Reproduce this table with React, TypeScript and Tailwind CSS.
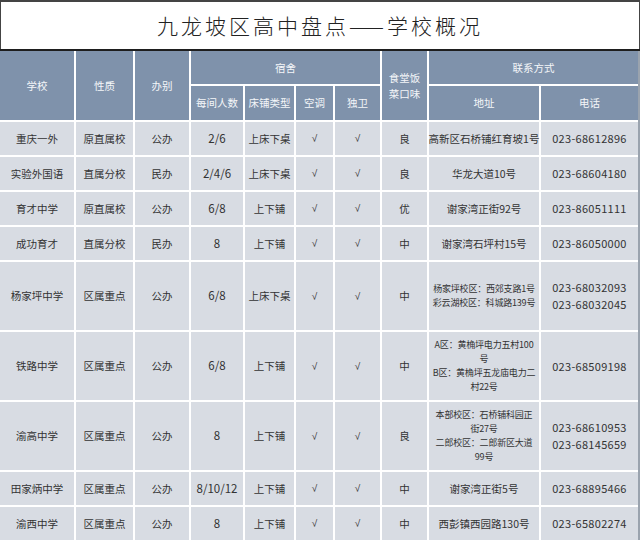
import React from "react";

const cjk = "font-['Noto_Sans_CJK_SC','Noto_Sans',sans-serif]";

type Row = {
  name: string;
  kind: string;
  type: string;
  people: string;
  bed: string;
  ac: string;
  bath: string;
  food: string;
  addr: string[];
  phone: string[];
};

const rows: Row[] = [
  { name: "重庆一外", kind: "原直属校", type: "公办", people: "2/6", bed: "上床下桌", ac: "√", bath: "√", food: "良", addr: ["高新区石桥铺红育坡1号"], phone: ["023-68612896"] },
  { name: "实验外国语", kind: "直属分校", type: "民办", people: "2/4/6", bed: "上床下桌", ac: "√", bath: "√", food: "良", addr: ["华龙大道10号"], phone: ["023-68604180"] },
  { name: "育才中学", kind: "原直属校", type: "公办", people: "6/8", bed: "上下铺", ac: "√", bath: "√", food: "优", addr: ["谢家湾正街92号"], phone: ["023-86051111"] },
  { name: "成功育才", kind: "直属分校", type: "民办", people: "8", bed: "上下铺", ac: "√", bath: "√", food: "中", addr: ["谢家湾石坪村15号"], phone: ["023-86050000"] },
  { name: "杨家坪中学", kind: "区属重点", type: "公办", people: "6/8", bed: "上床下桌", ac: "√", bath: "√", food: "中", addr: ["杨家坪校区：西郊支路1号", "彩云湖校区：科城路139号"], phone: ["023-68032093", "023-68032045"] },
  { name: "铁路中学", kind: "区属重点", type: "公办", people: "6/8", bed: "上下铺", ac: "√", bath: "√", food: "中", addr: ["A区：黄桷坪电力五村100", "号", "B区：黄桷坪五龙庙电力二", "村22号"], phone: ["023-68509198"] },
  { name: "渝高中学", kind: "区属重点", type: "公办", people: "8", bed: "上下铺", ac: "√", bath: "√", food: "良", addr: ["本部校区：石桥铺科园正", "街27号", "二郎校区：二郎新区大道", "99号"], phone: ["023-68610953", "023-68145659"] },
  { name: "田家炳中学", kind: "区属重点", type: "公办", people: "8/10/12", bed: "上下铺", ac: "√", bath: "√", food: "中", addr: ["谢家湾正街5号"], phone: ["023-68895466"] },
  { name: "渝西中学", kind: "区属重点", type: "公办", people: "8", bed: "上下铺", ac: "√", bath: "√", food: "中", addr: ["西彭镇西园路130号"], phone: ["023-65802274"] },
];

function Head({ children, className = "" }: { children: React.ReactNode; className?: string }) {
  return (
    <div className={`bg-[#7f92ab] text-[#f4f6f9] text-[10.5px] leading-[16px] flex items-center justify-center text-center ${className}`}>
      {children}
    </div>
  );
}

function Cell({ children, className = "text-[10.5px]" }: { children: React.ReactNode; className?: string }) {
  return (
    <div className={`bg-[#d8dce3] text-[#333] flex flex-col items-center justify-center text-center ${className}`}>
      {children}
    </div>
  );
}

export default function App() {
  return (
    <div className={`w-[640px] h-[542px] bg-white overflow-hidden ${cjk}`}>
      <div className="h-[49px] border-t-2 border-x border-[#444] flex items-center justify-center">
        <h1 className="text-[21px] tracking-[3px] text-[#222] font-light">
          九龙坡区高中盘点——学校概况
        </h1>
      </div>
      <div className="h-[2px] bg-[#1e1e1e]" />
      <div className="grid gap-[2px] grid-cols-[74px_57px_54px_52px_49px_37px_45px_45px_110px_97px] grid-rows-[33px_34px_33px_33px_33px_33px_68px_68px_68px_33px_33px] border-r-2 border-[#9aa3ae]">
        <Head className="row-span-2">学校</Head>
        <Head className="row-span-2">性质</Head>
        <Head className="row-span-2">办别</Head>
        <Head className="col-span-4">宿舍</Head>
        <Head className="row-span-2">
          食堂饭
          <br />
          菜口味
        </Head>
        <Head className="col-span-2">联系方式</Head>
        <Head>每间人数</Head>
        <Head>床铺类型</Head>
        <Head>空调</Head>
        <Head>独卫</Head>
        <Head>地址</Head>
        <Head>电话</Head>

        {rows.map((r) => (
          <React.Fragment key={r.name}>
            <Cell>{r.name}</Cell>
            <Cell>{r.kind}</Cell>
            <Cell>{r.type}</Cell>
            <Cell className="text-[11.5px]">{r.people}</Cell>
            <Cell>{r.bed}</Cell>
            <Cell className="text-[10px] font-['Liberation_Sans',sans-serif]">{r.ac}</Cell>
            <Cell className="text-[10px] font-['Liberation_Sans',sans-serif]">{r.bath}</Cell>
            <Cell>{r.food}</Cell>
            <Cell className={r.addr.length > 1 ? "text-[9px] leading-[14px] tracking-[-0.2px]" : "text-[10.5px]"}>
              {r.addr.map((a) => (
                <span key={a} className="whitespace-nowrap">{a}</span>
              ))}
            </Cell>
            <Cell className="text-[11px] tracking-[0.3px] leading-[17px]">
              {r.phone.map((p) => (
                <span key={p}>{p}</span>
              ))}
            </Cell>
          </React.Fragment>
        ))}
      </div>
    </div>
  );
}
